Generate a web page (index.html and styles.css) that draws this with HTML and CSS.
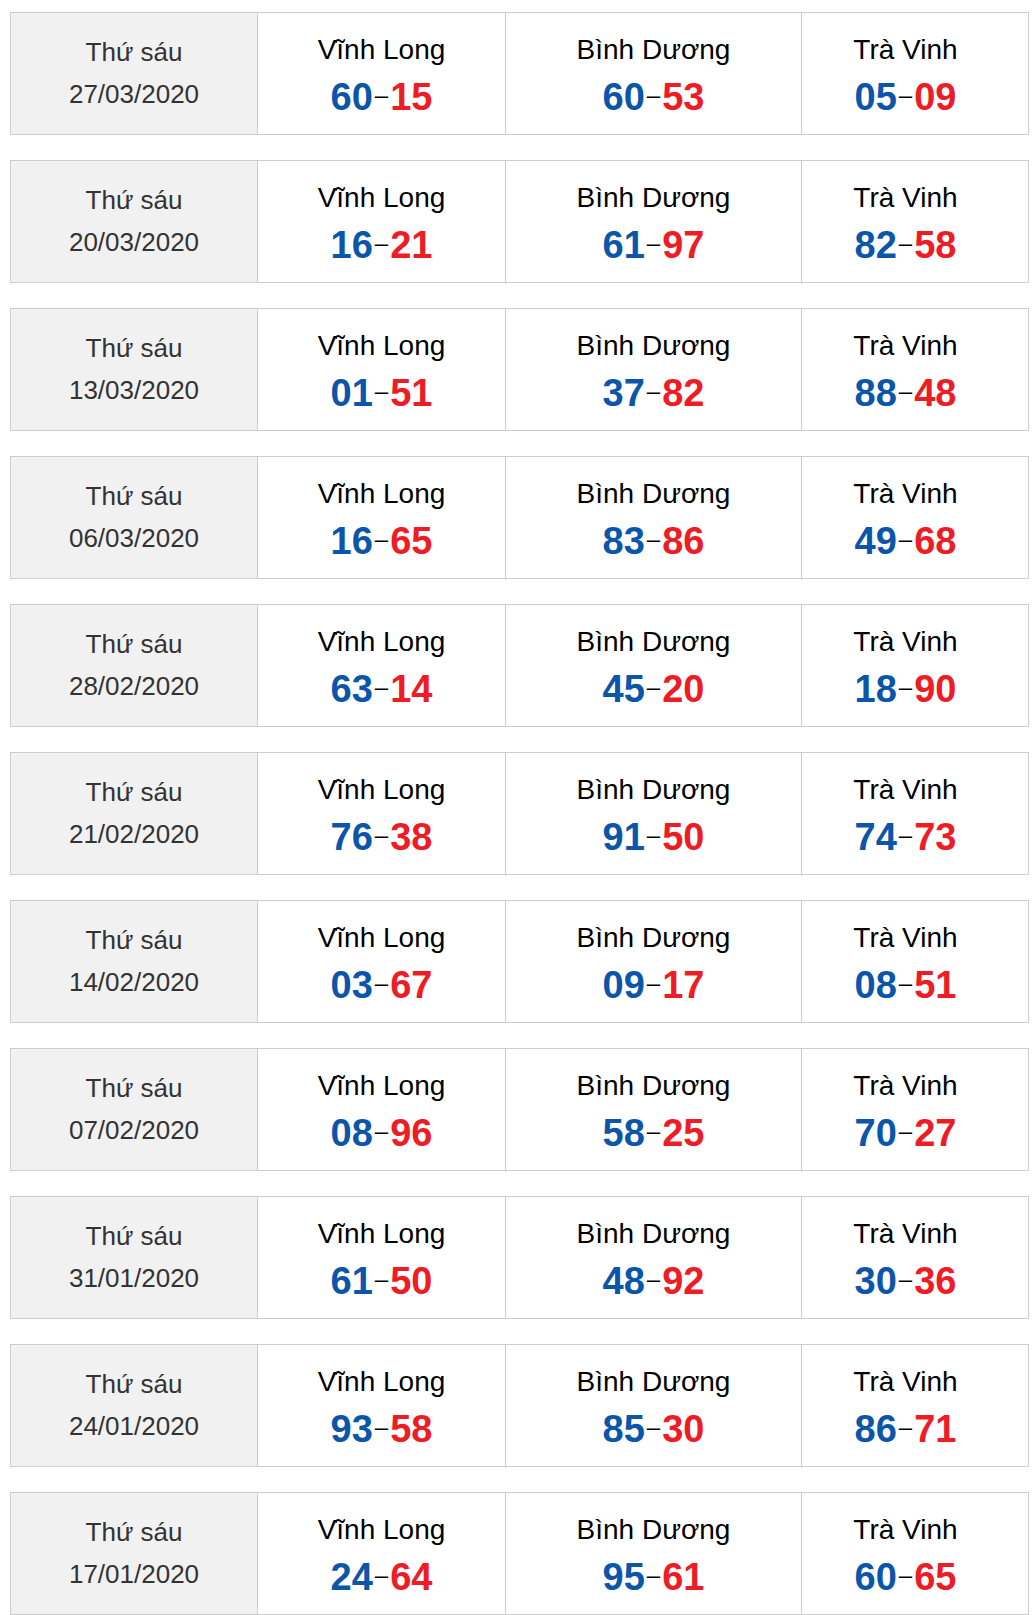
FILE: index.html
```html
<!DOCTYPE html>
<html lang="vi">
<head>
  <meta charset="UTF-8">
  <title>Kết quả Thứ sáu</title>
  <link rel="stylesheet" href="styles.css">
</head>
<body>
  <div class="wrap">
    <table class="kq">
      <colgroup><col class="c-date"><col class="c-vl"><col class="c-bd"><col class="c-tv"></colgroup>
      <tr>
        <td class="date"><div class="day">Thứ sáu</div><div>27/03/2020</div></td>
        <td><div class="name">Vĩnh Long</div><div class="num"><b>60</b><span class="sep">–</span><i>15</i></div></td>
        <td><div class="name">Bình Dương</div><div class="num"><b>60</b><span class="sep">–</span><i>53</i></div></td>
        <td class="last"><div class="name">Trà Vinh</div><div class="num"><b>05</b><span class="sep">–</span><i>09</i></div></td>
      </tr>
    </table>
    <table class="kq">
      <colgroup><col class="c-date"><col class="c-vl"><col class="c-bd"><col class="c-tv"></colgroup>
      <tr>
        <td class="date"><div class="day">Thứ sáu</div><div>20/03/2020</div></td>
        <td><div class="name">Vĩnh Long</div><div class="num"><b>16</b><span class="sep">–</span><i>21</i></div></td>
        <td><div class="name">Bình Dương</div><div class="num"><b>61</b><span class="sep">–</span><i>97</i></div></td>
        <td class="last"><div class="name">Trà Vinh</div><div class="num"><b>82</b><span class="sep">–</span><i>58</i></div></td>
      </tr>
    </table>
    <table class="kq">
      <colgroup><col class="c-date"><col class="c-vl"><col class="c-bd"><col class="c-tv"></colgroup>
      <tr>
        <td class="date"><div class="day">Thứ sáu</div><div>13/03/2020</div></td>
        <td><div class="name">Vĩnh Long</div><div class="num"><b>01</b><span class="sep">–</span><i>51</i></div></td>
        <td><div class="name">Bình Dương</div><div class="num"><b>37</b><span class="sep">–</span><i>82</i></div></td>
        <td class="last"><div class="name">Trà Vinh</div><div class="num"><b>88</b><span class="sep">–</span><i>48</i></div></td>
      </tr>
    </table>
    <table class="kq">
      <colgroup><col class="c-date"><col class="c-vl"><col class="c-bd"><col class="c-tv"></colgroup>
      <tr>
        <td class="date"><div class="day">Thứ sáu</div><div>06/03/2020</div></td>
        <td><div class="name">Vĩnh Long</div><div class="num"><b>16</b><span class="sep">–</span><i>65</i></div></td>
        <td><div class="name">Bình Dương</div><div class="num"><b>83</b><span class="sep">–</span><i>86</i></div></td>
        <td class="last"><div class="name">Trà Vinh</div><div class="num"><b>49</b><span class="sep">–</span><i>68</i></div></td>
      </tr>
    </table>
    <table class="kq">
      <colgroup><col class="c-date"><col class="c-vl"><col class="c-bd"><col class="c-tv"></colgroup>
      <tr>
        <td class="date"><div class="day">Thứ sáu</div><div>28/02/2020</div></td>
        <td><div class="name">Vĩnh Long</div><div class="num"><b>63</b><span class="sep">–</span><i>14</i></div></td>
        <td><div class="name">Bình Dương</div><div class="num"><b>45</b><span class="sep">–</span><i>20</i></div></td>
        <td class="last"><div class="name">Trà Vinh</div><div class="num"><b>18</b><span class="sep">–</span><i>90</i></div></td>
      </tr>
    </table>
    <table class="kq">
      <colgroup><col class="c-date"><col class="c-vl"><col class="c-bd"><col class="c-tv"></colgroup>
      <tr>
        <td class="date"><div class="day">Thứ sáu</div><div>21/02/2020</div></td>
        <td><div class="name">Vĩnh Long</div><div class="num"><b>76</b><span class="sep">–</span><i>38</i></div></td>
        <td><div class="name">Bình Dương</div><div class="num"><b>91</b><span class="sep">–</span><i>50</i></div></td>
        <td class="last"><div class="name">Trà Vinh</div><div class="num"><b>74</b><span class="sep">–</span><i>73</i></div></td>
      </tr>
    </table>
    <table class="kq">
      <colgroup><col class="c-date"><col class="c-vl"><col class="c-bd"><col class="c-tv"></colgroup>
      <tr>
        <td class="date"><div class="day">Thứ sáu</div><div>14/02/2020</div></td>
        <td><div class="name">Vĩnh Long</div><div class="num"><b>03</b><span class="sep">–</span><i>67</i></div></td>
        <td><div class="name">Bình Dương</div><div class="num"><b>09</b><span class="sep">–</span><i>17</i></div></td>
        <td class="last"><div class="name">Trà Vinh</div><div class="num"><b>08</b><span class="sep">–</span><i>51</i></div></td>
      </tr>
    </table>
    <table class="kq">
      <colgroup><col class="c-date"><col class="c-vl"><col class="c-bd"><col class="c-tv"></colgroup>
      <tr>
        <td class="date"><div class="day">Thứ sáu</div><div>07/02/2020</div></td>
        <td><div class="name">Vĩnh Long</div><div class="num"><b>08</b><span class="sep">–</span><i>96</i></div></td>
        <td><div class="name">Bình Dương</div><div class="num"><b>58</b><span class="sep">–</span><i>25</i></div></td>
        <td class="last"><div class="name">Trà Vinh</div><div class="num"><b>70</b><span class="sep">–</span><i>27</i></div></td>
      </tr>
    </table>
    <table class="kq">
      <colgroup><col class="c-date"><col class="c-vl"><col class="c-bd"><col class="c-tv"></colgroup>
      <tr>
        <td class="date"><div class="day">Thứ sáu</div><div>31/01/2020</div></td>
        <td><div class="name">Vĩnh Long</div><div class="num"><b>61</b><span class="sep">–</span><i>50</i></div></td>
        <td><div class="name">Bình Dương</div><div class="num"><b>48</b><span class="sep">–</span><i>92</i></div></td>
        <td class="last"><div class="name">Trà Vinh</div><div class="num"><b>30</b><span class="sep">–</span><i>36</i></div></td>
      </tr>
    </table>
    <table class="kq">
      <colgroup><col class="c-date"><col class="c-vl"><col class="c-bd"><col class="c-tv"></colgroup>
      <tr>
        <td class="date"><div class="day">Thứ sáu</div><div>24/01/2020</div></td>
        <td><div class="name">Vĩnh Long</div><div class="num"><b>93</b><span class="sep">–</span><i>58</i></div></td>
        <td><div class="name">Bình Dương</div><div class="num"><b>85</b><span class="sep">–</span><i>30</i></div></td>
        <td class="last"><div class="name">Trà Vinh</div><div class="num"><b>86</b><span class="sep">–</span><i>71</i></div></td>
      </tr>
    </table>
    <table class="kq">
      <colgroup><col class="c-date"><col class="c-vl"><col class="c-bd"><col class="c-tv"></colgroup>
      <tr>
        <td class="date"><div class="day">Thứ sáu</div><div>17/01/2020</div></td>
        <td><div class="name">Vĩnh Long</div><div class="num"><b>24</b><span class="sep">–</span><i>64</i></div></td>
        <td><div class="name">Bình Dương</div><div class="num"><b>95</b><span class="sep">–</span><i>61</i></div></td>
        <td class="last"><div class="name">Trà Vinh</div><div class="num"><b>60</b><span class="sep">–</span><i>65</i></div></td>
      </tr>
    </table>
  </div>
</body>
</html>
```

FILE: styles.css
```css
body {
  margin: 0;
  background: #fff;
  font-family: "Liberation Sans", Arial, sans-serif;
}
.wrap {
  padding: 12px 0 0 10px;
}
.kq {
  width: 1019px;
  table-layout: fixed;
  border-collapse: collapse;
  margin-bottom: 25px;
}
.c-date { width: 247px; }
.c-vl { width: 248px; }
.c-bd { width: 296px; }
.c-tv { width: 227px; }
.kq td {
  height: 121px;
  padding: 0;
  border: 1px solid #cdcdcd;
  text-align: center;
  vertical-align: top;
}
.kq td.last {
  padding-right: 19px;
}
.kq td.date {
  background: #f1f1f1;
  color: #333;
  font-size: 26px;
  line-height: 42px;
}
.day {
  padding-top: 18px;
}
.name {
  padding-top: 17px;
  font-size: 28px;
  line-height: 40px;
  color: #000;
}
.num {
  font-size: 38px;
  line-height: 50px;
  font-weight: bold;
}
.num b {
  color: #0b56a9;
}
.num i {
  font-style: normal;
  color: #ee1c25;
}
.sep {
  font-size: 24px;
  font-weight: normal;
  color: #000;
  vertical-align: 7px;
  margin: 0 2px;
}
```
